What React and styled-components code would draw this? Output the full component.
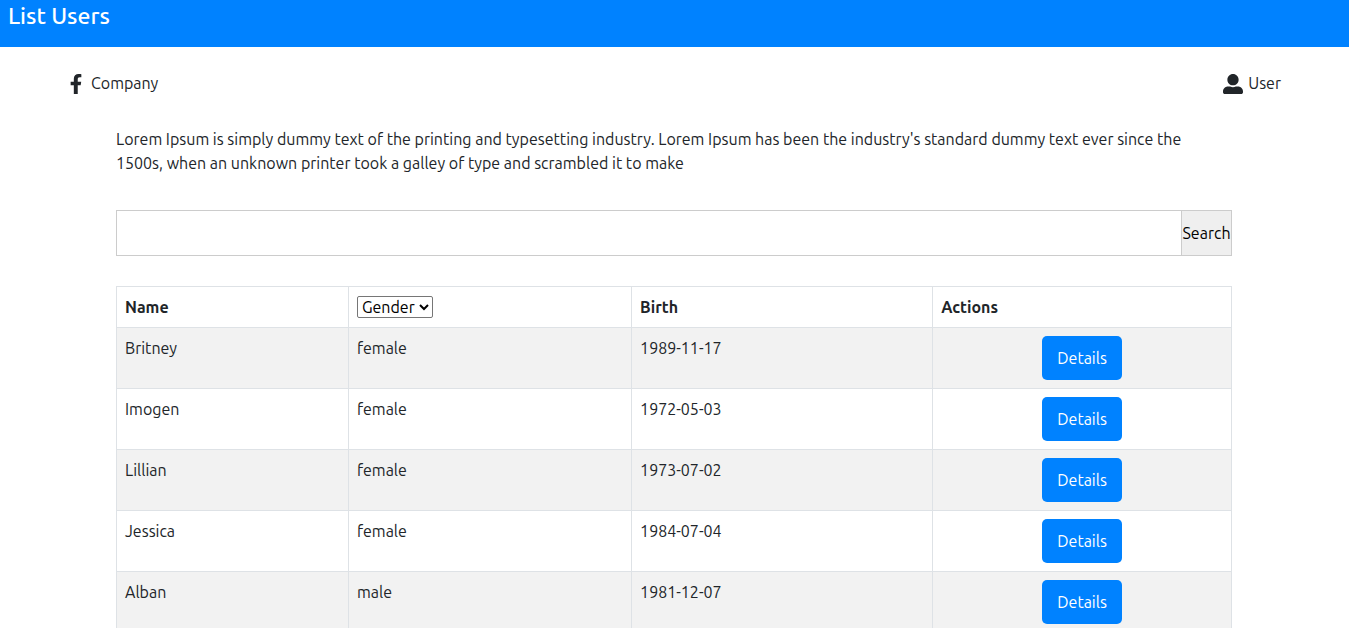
import React from "react";
import styled, { createGlobalStyle } from "styled-components";
import { FaFacebookF, FaUserAlt } from "react-icons/fa";

const GlobalStyle = createGlobalStyle`
  *, *::before, *::after { box-sizing: border-box; }
  body {
    margin: 0;
    background: #fff;
    color: #212529;
    font-family: Ubuntu, "Open Sans", "Noto Sans", sans-serif;
    font-size: 16px;
    line-height: 24px;
  }
  button, input, select { font: inherit; }
`;

const TopBar = styled.header`
  height: 47px;
  padding: 0 8px;
  background: #0082ff;
`;

const Title = styled.h1`
  margin: 0;
  color: #fff;
  font-size: 23px;
  font-weight: 500;
  line-height: 32px;
`;

const Page = styled.main`
  padding: 24px 68px 0 66px;
`;

const Brand = styled.div`
  display: flex;
  justify-content: space-between;
  margin-bottom: 32px;
`;

const BrandItem = styled.div`
  display: flex;
  align-items: center;
  gap: 5px;

  svg {
    font-size: 20px;
    position: relative;
    top: 1px;
  }
`;

const Content = styled.section`
  padding: 0 49px 0 50px;
`;

const Intro = styled.p`
  margin: 0 0 35px;
  padding-right: 24px;
`;

const SearchForm = styled.form`
  display: flex;
  height: 46px;
  margin-bottom: 30px;
  border: 1px solid #ccc;
`;

const SearchInput = styled.input`
  flex: 1;
  min-width: 0;
  padding: 0 8px;
  border: 0;
  outline: none;
`;

const SearchButton = styled.button`
  width: 50px;
  padding: 0;
  border: 0;
  border-left: 1px solid #ccc;
  background: #efefef;
  color: #000;
  cursor: pointer;
`;

const Table = styled.table`
  width: 100%;
  border-collapse: collapse;
  table-layout: fixed;
`;

const Column = styled.col`
  width: ${({ $share }) => $share}%;
`;

const HeadCell = styled.th`
  height: 41px;
  padding: 0 8px;
  border: 1px solid #dee2e6;
  text-align: left;
  font-weight: 700;
`;

const Row = styled.tr`
  &:nth-child(odd) { background: #f2f2f2; }
`;

const Cell = styled.td`
  padding: 8px;
  border: 1px solid #dee2e6;
  vertical-align: top;
  text-align: ${({ $align }) => $align || "left"};
`;

const GenderSelect = styled.select`
  display: block;
  width: 76px;
  height: 22px;
  padding: 0;
  border: 1px solid #767676;
  border-radius: 2px;
  background: #fff;
  color: #000;
  font-weight: 400;
  line-height: 20px;
`;

const DetailsButton = styled.button`
  display: block;
  width: 80px;
  height: 44px;
  margin: 0 auto;
  padding: 0;
  border: 0;
  border-radius: 5px;
  background: #0082ff;
  color: #fff;
  cursor: pointer;
`;

const users = [
  { name: "Britney", gender: "female", birth: "1989-11-17" },
  { name: "Imogen", gender: "female", birth: "1972-05-03" },
  { name: "Lillian", gender: "female", birth: "1973-07-02" },
  { name: "Jessica", gender: "female", birth: "1984-07-04" },
  { name: "Alban", gender: "male", birth: "1981-12-07" },
];

export default function App() {
  return (
    <>
      <GlobalStyle />
      <TopBar>
        <Title>List Users</Title>
      </TopBar>
      <Page>
        <Brand>
          <BrandItem><FaFacebookF aria-hidden="true" />Company</BrandItem>
          <BrandItem><FaUserAlt aria-hidden="true" />User</BrandItem>
        </Brand>
        <Content>
          <Intro>
            Lorem Ipsum is simply dummy text of the printing and typesetting industry. Lorem Ipsum has been the
            industry's standard dummy text ever since the 1500s, when an unknown printer took a galley of type and
            scrambled it to make
          </Intro>
          <SearchForm role="search" onSubmit={(event) => event.preventDefault()}>
            <SearchInput type="text" name="query" aria-label="Search" />
            <SearchButton type="submit">Search</SearchButton>
          </SearchForm>
          <Table>
            <colgroup>
              <Column $share={20.8} />
              <Column $share={25.4} />
              <Column $share={27} />
              <Column $share={26.8} />
            </colgroup>
            <thead>
              <tr>
                <HeadCell scope="col">Name</HeadCell>
                <HeadCell scope="col">
                  <GenderSelect aria-label="Gender" defaultValue="">
                    <option value="">Gender</option>
                    <option value="female">female</option>
                    <option value="male">male</option>
                  </GenderSelect>
                </HeadCell>
                <HeadCell scope="col">Birth</HeadCell>
                <HeadCell scope="col">Actions</HeadCell>
              </tr>
            </thead>
            <tbody>
              {users.map((user) => (
                <Row key={user.name}>
                  <Cell>{user.name}</Cell>
                  <Cell>{user.gender}</Cell>
                  <Cell>{user.birth}</Cell>
                  <Cell $align="center">
                    <DetailsButton type="button">Details</DetailsButton>
                  </Cell>
                </Row>
              ))}
            </tbody>
          </Table>
        </Content>
      </Page>
    </>
  );
}
